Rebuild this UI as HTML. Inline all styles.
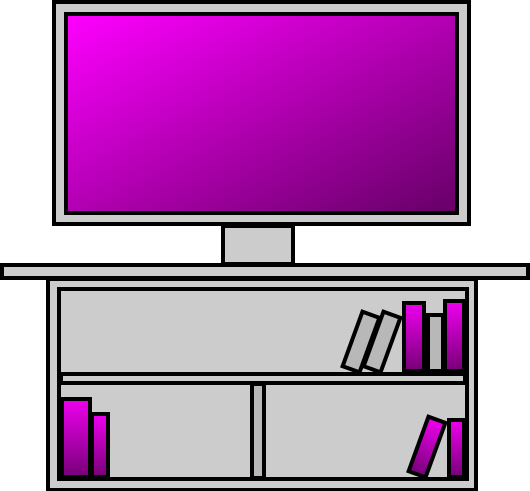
<!DOCTYPE html>
<html><head><style>html,body{margin:0;padding:0;background:#fff;overflow:hidden}svg{display:block}</style></head>
<body>
<svg width="530" height="491" viewBox="0 0 530 491" xmlns="http://www.w3.org/2000/svg">
<defs>
<linearGradient id="scr" x1="0" y1="0" x2="1" y2="1">
<stop offset="0" stop-color="#ff00ff"/><stop offset="1" stop-color="#660066"/></linearGradient>
<linearGradient id="bk" x1="0" y1="0" x2="0" y2="1">
<stop offset="0" stop-color="#ee00ee"/><stop offset="1" stop-color="#770077"/></linearGradient>
</defs>
<g stroke="#000" stroke-width="4">
<rect x="54" y="2" width="415" height="222" fill="#cccccc"/>
<rect x="66" y="14" width="391" height="199" fill="url(#scr)"/>
<rect x="223" y="226" width="70" height="38" fill="#cccccc"/>
<rect x="2" y="265" width="526" height="13" fill="#cccccc"/>
<rect x="48" y="279" width="428" height="211" fill="#cccccc"/>
<rect x="59" y="289" width="408" height="190" fill="#cccccc"/>
<rect x="61" y="374" width="404" height="9" fill="#cccccc"/>
<rect x="252" y="384" width="12" height="94" fill="#b8b8b8"/>
<rect x="62" y="399" width="28" height="78" fill="url(#bk)"/>
<rect x="92" y="414" width="16" height="63" fill="url(#bk)"/>
<rect x="-9" y="-29" width="18" height="58" fill="#b8b8b8" transform="translate(361,342) rotate(20)"/>
<rect x="-9" y="-29" width="18" height="58" fill="#b8b8b8" transform="translate(382,342) rotate(20)"/>
<rect x="404" y="303" width="20" height="68" fill="url(#bk)"/>
<rect x="428" y="315" width="15" height="56" fill="#b8b8b8"/>
<rect x="445" y="301" width="19" height="70" fill="url(#bk)"/>
<rect x="-9" y="-29" width="18" height="58" fill="url(#bk)" transform="translate(427,447) rotate(20)"/>
<rect x="449" y="420" width="15" height="57" fill="url(#bk)"/>
</g>
</svg>
</body></html>
